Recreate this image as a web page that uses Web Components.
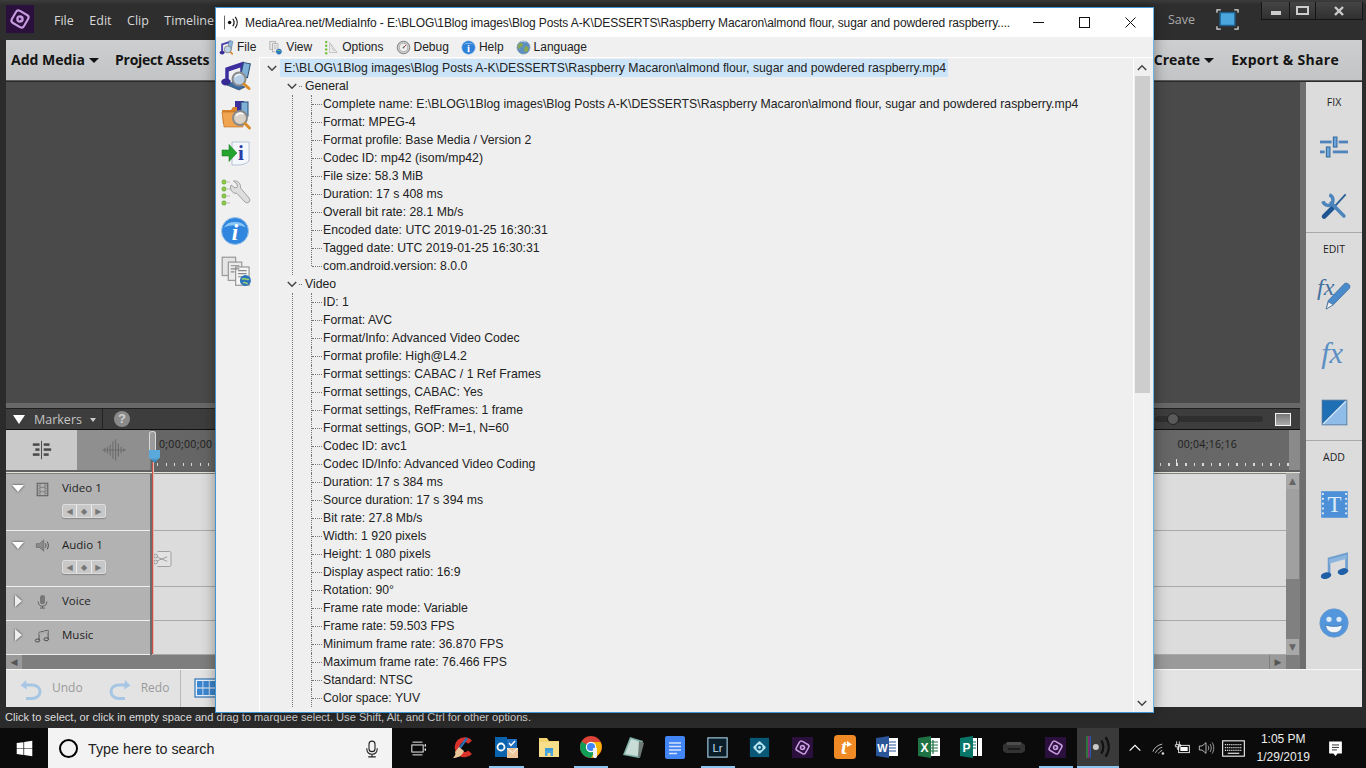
<!DOCTYPE html>
<html>
<head>
<meta charset="utf-8">
<title>MediaInfo over Premiere Elements</title>
<style>
  html, body { margin: 0; padding: 0; }
  body { width: 1366px; height: 768px; overflow: hidden; background: #0b0b0b; position: relative; font-family: "Liberation Sans", Arial, sans-serif; }
</style>
</head>
<body>
<pe-window></pe-window>
<win-taskbar></win-taskbar>

<mi-window title-text="MediaArea.net/MediaInfo - E:\BLOG\1Blog images\Blog Posts A-K\DESSERTS\Raspberry Macaron\almond flour, sugar and powdered raspberry....">
  <mi-tree root="E:\BLOG\1Blog images\Blog Posts A-K\DESSERTS\Raspberry Macaron\almond flour, sugar and powdered raspberry.mp4">
    <tree-group label="General">
      <tree-leaf>Complete name: E:\BLOG\1Blog images\Blog Posts A-K\DESSERTS\Raspberry Macaron\almond flour, sugar and powdered raspberry.mp4</tree-leaf>
      <tree-leaf>Format: MPEG-4</tree-leaf>
      <tree-leaf>Format profile: Base Media / Version 2</tree-leaf>
      <tree-leaf>Codec ID: mp42 (isom/mp42)</tree-leaf>
      <tree-leaf>File size: 58.3 MiB</tree-leaf>
      <tree-leaf>Duration: 17 s 408 ms</tree-leaf>
      <tree-leaf>Overall bit rate: 28.1 Mb/s</tree-leaf>
      <tree-leaf>Encoded date: UTC 2019-01-25 16:30:31</tree-leaf>
      <tree-leaf>Tagged date: UTC 2019-01-25 16:30:31</tree-leaf>
      <tree-leaf>com.android.version: 8.0.0</tree-leaf>
    </tree-group>
    <tree-group label="Video">
      <tree-leaf>ID: 1</tree-leaf>
      <tree-leaf>Format: AVC</tree-leaf>
      <tree-leaf>Format/Info: Advanced Video Codec</tree-leaf>
      <tree-leaf>Format profile: High@L4.2</tree-leaf>
      <tree-leaf>Format settings: CABAC / 1 Ref Frames</tree-leaf>
      <tree-leaf>Format settings, CABAC: Yes</tree-leaf>
      <tree-leaf>Format settings, RefFrames: 1 frame</tree-leaf>
      <tree-leaf>Format settings, GOP: M=1, N=60</tree-leaf>
      <tree-leaf>Codec ID: avc1</tree-leaf>
      <tree-leaf>Codec ID/Info: Advanced Video Coding</tree-leaf>
      <tree-leaf>Duration: 17 s 384 ms</tree-leaf>
      <tree-leaf>Source duration: 17 s 394 ms</tree-leaf>
      <tree-leaf>Bit rate: 27.8 Mb/s</tree-leaf>
      <tree-leaf>Width: 1 920 pixels</tree-leaf>
      <tree-leaf>Height: 1 080 pixels</tree-leaf>
      <tree-leaf>Display aspect ratio: 16:9</tree-leaf>
      <tree-leaf>Rotation: 90°</tree-leaf>
      <tree-leaf>Frame rate mode: Variable</tree-leaf>
      <tree-leaf>Frame rate: 59.503 FPS</tree-leaf>
      <tree-leaf>Minimum frame rate: 36.870 FPS</tree-leaf>
      <tree-leaf>Maximum frame rate: 76.466 FPS</tree-leaf>
      <tree-leaf>Standard: NTSC</tree-leaf>
      <tree-leaf more>Color space: YUV</tree-leaf>
    </tree-group>
  </mi-tree>
</mi-window>

<script>
// all icons, viewBox 0 0 24 24 unless the element says otherwise
const ICONS = {
  elements: `<rect width="24" height="24" fill="#2b0f3c"/><rect x="6" y="6" width="12" height="12" rx="2.5" transform="rotate(30 12 12)" fill="none" stroke="#c79ce0" stroke-width="1.8"/><circle cx="12" cy="12" r="3.2" fill="#c79ce0"/><path d="M11 10.4l2.6 1.6-2.6 1.6z" fill="#2b0f3c"/>`,
  monitor: `<path d="M1 5V2h4M19 2h4v3M1 19v3h4M19 22h4v-3" fill="none" stroke="#ddd" stroke-width="1.3"/><rect x="3.5" y="4" width="17" height="15" fill="#1c5f8e"/><rect x="5" y="5.5" width="14" height="12" fill="#4aa6dc"/>`,
  sliders: `<g fill="#4f83bb"><rect x="0" y="6.5" width="10" height="2.4"/><rect x="16" y="6.5" width="8" height="2.4"/><rect x="0" y="15" width="4" height="2.4"/><rect x="11" y="15" width="13" height="2.4"/></g><rect x="11.5" y="3.5" width="3" height="8.5" fill="#6aa6dc" stroke="#3c6d9f"/><rect x="5.5" y="12" width="3" height="8.5" fill="#6aa6dc" stroke="#3c6d9f"/>`,
  tools: `<path d="M22 2L12 13" stroke="#2c5f95" stroke-width="1.6"/><path d="M11 13.5L3.5 21" stroke="#1f5590" stroke-width="4" stroke-linecap="round"/><path d="M9.5 9.5L20.5 20.5" stroke="#4c84bc" stroke-width="3" stroke-linecap="round"/><path d="M8 2.5C11.5 3.5 12 8 10 10.5 7.5 12.5 3.5 11.5 2.5 8" fill="none" stroke="#4c84bc" stroke-width="3"/>`,
  fxpen: `<text x="0" y="14" font-family="Liberation Serif, serif" font-style="italic" font-size="17" fill="#44709f">fx</text><path d="M6.5 24l1.5-6L19 6.5c1-1 2.2-1 3.4 0s1 2.4 0 3.4L11.5 21z" fill="#4a8ccb" stroke="#2f5f8f" stroke-width=".5"/><path d="M6.5 24l1.5-5 3.5 2z" fill="#eef3f8" stroke="#4d6f90" stroke-width=".5"/>`,
  fx: `<text x="1" y="20" font-family="Liberation Serif, serif" font-style="italic" font-size="26" fill="#5b8fc4">fx</text>`,
  square: `<rect x="1" y="1" width="22" height="22" fill="#8fbce8"/><path d="M1 1h22L1 23z" fill="#1f6fb5"/><path d="M23 1L1 23" stroke="#e8eef5" stroke-width="1.1"/><rect x="1" y="1" width="22" height="22" fill="none" stroke="#4a6f95" stroke-width=".7"/>`,
  titleT: `<rect x="1" y="1" width="22" height="22" fill="#4d90d8"/><g fill="#dce8f3"><rect x="1.6" y="2.5" width="1.6" height="1.6"/><rect x="1.6" y="6.5" width="1.6" height="1.6"/><rect x="1.6" y="10.5" width="1.6" height="1.6"/><rect x="1.6" y="14.5" width="1.6" height="1.6"/><rect x="1.6" y="18.5" width="1.6" height="1.6"/><rect x="20.8" y="2.5" width="1.6" height="1.6"/><rect x="20.8" y="6.5" width="1.6" height="1.6"/><rect x="20.8" y="10.5" width="1.6" height="1.6"/><rect x="20.8" y="14.5" width="1.6" height="1.6"/><rect x="20.8" y="18.5" width="1.6" height="1.6"/></g><text x="12" y="18.5" text-anchor="middle" font-family="Liberation Serif, serif" font-size="19" fill="#dcebf8">T</text>`,
  note: `<path d="M7.5 20V6.5L22 2.5v14" fill="none" stroke="#6f9fd0" stroke-width="2.2"/><path d="M7.5 7L22 3v3.5L7.5 10.5z" fill="#8db6de"/><ellipse cx="5" cy="20.4" rx="4.4" ry="2.7" fill="#1f5fa6" transform="rotate(-14 5 20.4)"/><ellipse cx="19" cy="17" rx="4.4" ry="2.7" fill="#1f5fa6" transform="rotate(-14 19 17)"/>`,
  smile: `<circle cx="12" cy="12" r="11.4" fill="#5496dc" stroke="#6f9ac6" stroke-width=".5"/><circle cx="8" cy="9" r="2.1" fill="#dbe9f6"/><circle cx="16" cy="9" r="2.1" fill="#dbe9f6"/><path d="M5.2 13.5c4 1.6 9.6 1.6 13.6 0-.6 4.4-3.4 6.3-6.8 6.3S5.8 17.9 5.2 13.5z" fill="#f1f5f8" stroke="#2f6aa5" stroke-width=".5"/>`,
  undo: `<path d="M7 4L1.5 9.5 8 13.5" fill="#a8c8e6"/><path d="M4 9h9c5 0 8 3 8 6.5S18 22.5 13 22.5H7" fill="none" stroke="#a6c6e4" stroke-width="3"/>`,
  redo: `<path d="M17 4l5.5 5.5L16 13.5" fill="#a8c8e6"/><path d="M20 9h-9c-5 0-8 3-8 6.5s3 7 8 7h6" fill="none" stroke="#a6c6e4" stroke-width="3"/>`,
  grid: `<rect x="1" y="3" width="22" height="18" fill="#e9f1f9" stroke="#2e73b5" stroke-width="1.2"/><g fill="#3c86cf"><rect x="3" y="5" width="5.5" height="6.5"/><rect x="9.3" y="5" width="5.5" height="6.5"/><rect x="15.6" y="5" width="5.5" height="6.5"/><rect x="3" y="12.5" width="5.5" height="6.5"/><rect x="9.3" y="12.5" width="5.5" height="6.5"/><rect x="15.6" y="12.5" width="5.5" height="6.5"/></g>`,
  trackFilm: `<rect x="3.5" y="2" width="17" height="20" fill="none" stroke="#555" stroke-width="1.5"/><path d="M8 2v20M16 2v20M8 8.5h8M8 15.5h8M3.5 6h4M3.5 10h4M3.5 14h4M3.5 18h4M16 6h4.5M16 10h4.5M16 14h4.5M16 18h4.5" stroke="#666" stroke-width="1" fill="none"/>`,
  trackAudio: `<path d="M2 9h5l7-6v18l-7-6H2z" fill="#8a8a8a" stroke="#555" stroke-width=".8"/><path d="M16.5 8.5c1.5 2 1.5 5 0 7M19.5 6c2.5 3.5 2.5 8.5 0 12" fill="none" stroke="#444" stroke-width="1.5"/>`,
  trackVoice: `<rect x="8" y="1.5" width="8" height="15" rx="4" fill="#777"/><path d="M5 12c0 5 3 7.5 7 7.5s7-2.5 7-7.5M12 19.5V22M8 22.5h8" fill="none" stroke="#555" stroke-width="1.4"/>`,
  trackMusic: `<path d="M6.5 20V7L21 3.5V18" fill="none" stroke="#555" stroke-width="1.6"/><path d="M6.5 7.5L21 4v3L6.5 10.5z" fill="#aaa"/><ellipse cx="4" cy="20" rx="3.6" ry="2.4" fill="none" stroke="#444" stroke-width="1.5"/><ellipse cx="18" cy="18" rx="3.6" ry="2.4" fill="none" stroke="#444" stroke-width="1.5"/>`,
  collapse: `<g fill="#4a4a4a"><rect x="1" y="4" width="8" height="3"/><rect x="14" y="4" width="7" height="3"/><rect x="4" y="10" width="5" height="3"/><rect x="14" y="10" width="9" height="3"/><rect x="1" y="16" width="8" height="3"/><rect x="14" y="16" width="6" height="3"/></g><rect x="11" y="1" width="1" height="22" fill="#333"/>`,
  wave: `<path d="M1 12h22M3.5 10v4M6 9v6M8.5 7v10M11 4v16M13.5 2v20M16 6v12M18.5 9v6M21 10.5v3" stroke="#6c6c6c" stroke-width="1" fill="none"/>`,
  scissors: `<path d="M6 2h16a2 2 0 0 1 2 2v16a2 2 0 0 1-2 2H6" fill="#e2e2e2" stroke="#999" stroke-width="1.2"/><circle cx="3.5" cy="8" r="2.5" fill="none" stroke="#999" stroke-width="1.2"/><circle cx="3.5" cy="16" r="2.5" fill="none" stroke="#999" stroke-width="1.2"/><path d="M5.5 9.5L19 15M5.5 14.5L19 9" stroke="#999" stroke-width="1.2"/>`,

  miFile: `<path d="M5 20V7l13-4v15" fill="none" stroke="#4b3fa8" stroke-width="3"/><ellipse cx="5" cy="20" rx="4" ry="3" fill="#3c2f97"/><rect x="15" y="1.5" width="6" height="14" fill="#8fb6d8" stroke="#345a80" stroke-width=".6" transform="rotate(12 18 8)"/><circle cx="14" cy="15" r="5.5" fill="#bdd3e8" stroke="#8b8b8b" stroke-width="1.5"/><path d="M18 19l4 4" stroke="#d88a2a" stroke-width="2.5"/>`,
  miView: `<rect x="3" y="2" width="9" height="13" fill="#e8e8e8" stroke="#9a9a9a"/><rect x="7" y="6" width="9" height="13" fill="#f0f0f0" stroke="#9a9a9a"/><path d="M9 9h5M9 11.5h5M9 14h5" stroke="#aaa"/><circle cx="17.5" cy="18.5" r="4.5" fill="#2a78c0"/><path d="M15 17c2-1.5 3 1 5 0" stroke="#8fd06a" fill="none" stroke-width="1.4"/>`,
  miOptions: `<path d="M9 4l12 16H9z" fill="#efefef" stroke="#aaa"/><path d="M12 12l5 6M11 9h2" stroke="#999"/><g fill="#7ac143"><circle cx="3.5" cy="3" r="2"/><circle cx="3.5" cy="9" r="2"/><circle cx="3.5" cy="15" r="2"/><circle cx="3.5" cy="21" r="2"/></g>`,
  miDebug: `<circle cx="12" cy="12" r="10" fill="#cfcfcf" stroke="#777" stroke-width="1.5"/><circle cx="12" cy="12" r="6.5" fill="#f2f2f2" stroke="#999"/><path d="M12 12l4-4" stroke="#b03030" stroke-width="1.6"/><circle cx="12" cy="12" r="1.5" fill="#666"/>`,
  miHelp: `<circle cx="12" cy="12" r="11" fill="#2f80d8" stroke="#bcd5ef"/><path d="M4 8a9 7 0 0 1 16 0c-4-2.5-12-2.5-16 0z" fill="#8cc1f2"/><text x="12" y="19" text-anchor="middle" font-family="Liberation Serif, serif" font-weight="700" font-size="17" fill="#fff">i</text>`,
  miLang: `<circle cx="12" cy="12" r="10.5" fill="#5d8fc2" stroke="#8a9aa8"/><path d="M6 5c4-1 6 2 5 4s-4 1-5 4-2 1-3-1 1-5 3-7zM14 11c4-2 6 0 6 3s-3 6-5 5-3-6-1-8z" fill="#8aa84e"/><path d="M8 3c3-1 6-1 8 1" stroke="#dfeaf3" fill="none" stroke-width="1.2"/>`,
  miOpen: `<path d="M6 21V8l15-5v15" fill="none" stroke="#3d2f9e" stroke-width="3.5"/><path d="M6 8l15-5v3L6 11z" fill="#3d2f9e"/><ellipse cx="5" cy="21" rx="4.8" ry="3.4" fill="#352a96"/><path d="M6 24l12 5 6-3-12-5z" fill="#3a6ba3" stroke="#1d3557" stroke-width=".6"/><rect x="21" y="2" width="7" height="14" fill="#7fb0d8" stroke="#2a4e75" transform="rotate(12 24 9)"/><circle cx="18" cy="18" r="6.5" fill="#b6cde4" stroke="#8a8a8a" stroke-width="2"/><path d="M14 16a5 5 0 0 1 6-2" stroke="#eef5fb" stroke-width="1.5" fill="none"/><path d="M23 23l5 4.5" stroke="#d98c2a" stroke-width="3" stroke-linecap="round"/>`,
  miFolder: `<rect x="14" y="1" width="9" height="14" fill="#3d2f9e"/><rect x="20" y="2" width="7" height="14" fill="#7fb0d8" stroke="#2a4e75"/><path d="M1 10h9l2-3h4v17H2z" fill="#d9832b"/><path d="M1 12h22l-1 15H3z" fill="#f0a450" stroke="#b96a1d" stroke-width=".6"/><circle cx="19" cy="18" r="7" fill="#d8d2c8" stroke="#8a8a8a" stroke-width="2"/><path d="M15 16a5 5 0 0 1 7-2" stroke="#fff" stroke-width="1.5" fill="none"/><path d="M24 23.5l4.5 4.5" stroke="#d98c2a" stroke-width="3" stroke-linecap="round"/>`,
  miInfoArrow: `<path d="M11 3h17v19c-3 3-7 4-12 4h-5z" fill="#f4f7fb" stroke="#a7b8d0" stroke-width=".8"/><text x="20" y="21" text-anchor="middle" font-family="Liberation Serif, serif" font-weight="700" font-size="21" fill="#2b3fa8">i</text><path d="M1 11h7V5.500L16 14l-8 8.500V17H1z" fill="#25a32f" stroke="#15751c" stroke-width=".5"/>`,
  miTools: `<g fill="#8cc84b" stroke="#5a9a25" stroke-width=".5"><circle cx="3" cy="4" r="2.2"/><circle cx="3" cy="11" r="2.2"/><circle cx="3" cy="18" r="2.2"/><circle cx="3" cy="25" r="2.2"/></g><path d="M6 4h3M6 11h3M6 18h3M6 25h3" stroke="#bbb"/><path d="M10 7l4 3 2.5-1-.5-3-3.5-3a6 6 0 0 1 7 7L28 20a2.500 2.500 0 0 1-4 4l-8-8.500A6 6 0 0 1 10 7z" fill="#dedede" stroke="#999" stroke-width=".9"/>`,
  miInfo: `<circle cx="14" cy="14" r="13.5" fill="#2e86de" stroke="#9cc3ea"/><path d="M3 10.500a12 9 0 0 1 22 0c-6-3-16-3-22 0z" fill="#8cc6f6"/><text x="14" y="23" text-anchor="middle" font-family="Liberation Serif, serif" font-style="italic" font-weight="700" font-size="23" fill="#fff">i</text>`,
  miDocs: `<g transform="scale(1.22)"><rect x="1" y="1" width="11" height="15" fill="#e4e4e4" stroke="#999"/><rect x="6" y="5" width="11" height="15" fill="#ececec" stroke="#999"/><rect x="12" y="9" width="11" height="15" fill="#f6f6f6" stroke="#999"/><path d="M8 8h7M8 10.5h7M8 13h3M14 12h7M14 14.5h7M14 17h4" stroke="#888"/><circle cx="20" cy="20" r="4.5" fill="#2b74bc"/><path d="M17 19c2-1.5 4 1 6 0M18 22c2-1 2 1 4 .5" stroke="#9ad06e" fill="none" stroke-width="1.2"/></g>`,
  miApp: `<rect x="0" y="1" width="1.3" height="22" fill="#444"/><circle cx="9" cy="12" r="2.8" fill="#111"/><path d="M14 6c2.500 3.500 2.500 8.500 0 12M18 3c4 5.500 4 12.500 0 18" fill="none" stroke="#222" stroke-width="2"/>`,
  miAppTask: `<rect x="1" y="2" width="1.6" height="20" fill="#2f7f3f"/><rect x="3" y="2" width="1.2" height="20" fill="#a02a8a"/><rect x="4.5" y="2" width="1" height="20" fill="#2a55b0"/><circle cx="10" cy="12" r="2.8" fill="#c8c8c8"/><path d="M15 6c2.500 3.500 2.500 8.500 0 12M19 3c4 5.500 4 12.500 0 18" fill="none" stroke="#111" stroke-width="2"/>`,

  winLogo: `<path d="M1 4.2L10.5 3v8.5H1zM11.5 2.800L23 1.200v10.300H11.500zM1 12.500h9.500V21L1 19.800zM11.500 12.500H23v10.300l-11.500-1.600z" fill="#fff"/>`,
  mic: `<rect x="8" y="1.500" width="8" height="14" rx="4" fill="none" stroke="#222" stroke-width="1.5"/><path d="M5 11c0 5 3 8 7 8s7-3 7-8M12 19v3M7 22.500h10" fill="none" stroke="#222" stroke-width="1.5"/>`,
  taskview: `<path d="M5 3h14M5 21h14" stroke="#fff" stroke-width="1.3"/><rect x="4" y="7" width="16" height="10" fill="none" stroke="#fff" stroke-width="1.3"/><path d="M23 6v3M23 12v3" stroke="#fff" stroke-width="1.8"/>`,
  ccleaner: `<path d="M20 5.500A10 10 0 1 0 20 19l-3.800-3.500a5 5 0 1 1 0-6.800z" fill="#d9322a"/><path d="M15 3L7 14" stroke="#2d6fb4" stroke-width="2.4"/><path d="M7 12l5 4c-2 5-6 7-11 7 2-2 3-4 2-6z" fill="#ecc69a"/>`,
  outlook: `<rect x="10" y="4" width="13" height="13" fill="#1f6fc0"/><rect x="1" y="2" width="12" height="20" fill="#0a64ad"/><circle cx="7" cy="12" r="3.5" fill="none" stroke="#fff" stroke-width="1.8"/><path d="M15 8l2 2.500 4-4.500" stroke="#fff" fill="none" stroke-width="1.4"/><rect x="13" y="13" width="11" height="10" fill="#ecc69a"/><path d="M13 13l5.500 5 5.500-5" fill="none" stroke="#fff" stroke-width="1"/>`,
  explorer: `<path d="M2 3h8l2 3h10v16H2z" fill="#f2d36f"/><rect x="2" y="7" width="20" height="15" fill="#f6de8a"/><path d="M8 21v-6h8v6h-2.500v-3h-3v3z" fill="#4aa6dc"/><rect x="8" y="13" width="8" height="2.5" fill="#3a9ad5"/>`,
  chrome: `<circle cx="12" cy="12" r="11" fill="#db4437"/><path d="M12 12L2.500 6.500A11 11 0 0 0 12 23l5.500-5z" fill="#0f9d58"/><path d="M12 7h9.500A11 11 0 0 1 12 23l5-9z" fill="#f4b400"/><circle cx="12" cy="12" r="5.2" fill="#fff"/><circle cx="12" cy="12" r="4" fill="#4285f4"/><path d="M14 13h4v9c-1 1.500-3 1.500-4 0z" fill="#f2f2f2"/>`,
  notepad: `<path d="M2 20L9 2l13 4-4 17z" fill="#7fb0a6"/><path d="M4 19L10 4l10 3-3 14z" fill="#c9dcd6"/><path d="M18 6l5 2-4 15-2-1z" fill="#6d7a75"/>`,
  docs: `<rect x="2" y="1" width="20" height="23" rx="2" fill="#4285f4"/><path d="M6 8h12M6 11.500h12M6 15h12M6 18.500h8" stroke="#d6e4fb" stroke-width="1.5"/>`,
  lr: `<rect x="1" y="1" width="22" height="22" fill="#0c1d2a" stroke="#a6cfe6" stroke-width="1.3"/><text x="12" y="17" text-anchor="middle" font-family="Liberation Sans, sans-serif" font-size="13" fill="#c3dff0">Lr</text>`,
  elementsBlue: `<rect x="1" y="1" width="22" height="22" fill="#0a5878"/><rect x="6.5" y="6.5" width="11" height="11" rx="2" transform="rotate(45 12 12)" fill="#b7e6f2"/><circle cx="12" cy="12" r="3.5" fill="#0a5878"/><circle cx="12" cy="12" r="1.6" fill="#b7e6f2"/>`,
  tinder: `<rect x="1" y="0" width="22" height="24" rx="3.5" fill="#f08a24"/><text x="11" y="19" text-anchor="middle" font-family="Liberation Serif, serif" font-style="italic" font-weight="700" font-size="21" fill="#fff">t</text><path d="M14 6l5 3.500-5 2.500z" fill="#fff"/>`,
  word: `<rect x="9" y="3" width="14" height="18" fill="#fff"/><path d="M12 7h9M12 10h9M12 13h9M12 16h9" stroke="#2a5699" stroke-width="1.2"/><path d="M1 3l13-2v22L1 21z" fill="#2a5699"/><text x="7.5" y="16.5" text-anchor="middle" font-family="Liberation Sans, sans-serif" font-weight="700" font-size="11" fill="#fff">W</text>`,
  excel: `<rect x="9" y="3" width="14" height="18" fill="#fff"/><path d="M12 7h9M12 10h9M12 13h9M12 16h9M16 5v14" stroke="#1f7244" stroke-width="1.2"/><path d="M1 3l13-2v22L1 21z" fill="#1f7244"/><text x="7.5" y="16.5" text-anchor="middle" font-family="Liberation Sans, sans-serif" font-weight="700" font-size="12" fill="#fff">X</text>`,
  publisher: `<rect x="13" y="3" width="5" height="18" fill="#fff"/><rect x="19" y="3" width="4" height="18" fill="#fff"/><path d="M14 7h3M14 10h3M14 13h3" stroke="#077568" stroke-width="1.2"/><path d="M1 3l13-2v22L1 21z" fill="#077568"/><text x="7.5" y="16.5" text-anchor="middle" font-family="Liberation Sans, sans-serif" font-weight="700" font-size="12" fill="#fff">P</text>`,
  printer: `<path d="M1 10l4-3h14l4 3v6l-3 2H4l-3-2z" fill="#333"/><path d="M5 7h14v3H5z" fill="#4d4d4d"/><rect x="6" y="13" width="12" height="2" fill="#1c1c1c"/>`,
  chevUp: `<path d="M4 16l8-8 8 8" fill="none" stroke="#fff" stroke-width="1.8"/>`,
  wifi: `<path d="M3 17c2-6 8-11 15-12M7 19c2-4 6-8 11-9M12 20c1-2 3-4 6-5" fill="none" stroke="#ddd" stroke-width="1.3"/><circle cx="19" cy="20" r="2" fill="#ddd"/>`,
  battery: `<path d="M4 2v5M8 2v5M2 7h8v3H7v4H5v-4H2z" fill="none" stroke="#fff" stroke-width="1.2"/><rect x="7" y="8" width="16" height="11" fill="none" stroke="#fff" stroke-width="1.3"/><rect x="9.5" y="10.5" width="11" height="6" fill="#fff"/>`,
  speaker: `<path d="M2 9h4l6-5v16l-6-5H2z" fill="none" stroke="#ddd" stroke-width="1.2"/><path d="M15 8.500c1.500 2 1.500 5 0 7M18 6c2.500 3.500 2.500 8.500 0 12M21 3.500c3.500 5 3.500 12 0 17" fill="none" stroke="#ccc" stroke-width="1.1"/>`,
  keyboard: `<rect x=".7" y="4" width="22.6" height="16" fill="none" stroke="#fff" stroke-width="1.1"/><path d="M3 8h18M3 11h18M3 14h18" stroke="#ddd" stroke-width="1.3" stroke-dasharray="1.2 .8"/><path d="M6 17h12" stroke="#ddd" stroke-width="1.3"/>`,
  notify: `<path d="M3 2h18v17h-6l-3 3.500L9 19H3z" fill="#fff"/><path d="M7 7h10M7 10.500h10M7 14h7" stroke="#111" stroke-width="1.2"/>`
};

class AppIcon extends HTMLElement {
  connectedCallback() {
    const w = this.getAttribute('size') || 24;
    const box = this.getAttribute('box') || 24;
    this.attachShadow({ mode: 'open' });
    this.shadowRoot.innerHTML = `
      <style>
        :host { display: inline-flex; flex: none; line-height: 0; }
        svg { display: block; overflow: visible; }
      </style>
      <svg width="${w}" height="${w}" viewBox="0 0 ${box} ${box}">${ICONS[this.getAttribute('name')] || ''}</svg>`;
  }
}
customElements.define('app-icon', AppIcon);

// ---------- Premiere Elements window behind ----------

class PeHeader extends HTMLElement {
  constructor() {
    super();
    this.attachShadow({ mode: 'open' });
    this.shadowRoot.innerHTML = `
      <style>
        :host { display: flex; align-items: center; height: 40px; background: linear-gradient(#3c3c3c, #2e2e2e 12%, #2e2e2e); color: #d8d8d8;
          font: 12.5px "Open Sans", sans-serif; padding: 0 3px 0 6px; box-sizing: border-box; }
        .logo { margin: -2px 20px 0 0; }
        nav { display: flex; gap: 15.5px; flex: 1; }
        .save { color: #a9a9a9; margin-right: 21px; margin-top: -1px; }
        .mon { margin-right: 22px; margin-top: -2px; }
        .ctl { display: flex; align-self: flex-start; margin-top: 2px; height: 17px; border: 1px solid #151515; border-top: 0; background: linear-gradient(#454545, #303030); }
        .ctl div { display: flex; align-items: center; justify-content: center; border-left: 1px solid #151515; }
        .ctl div:first-child { border: 0; width: 27px; }
        .ctl div:nth-child(2) { width: 25px; }
        .ctl div:nth-child(3) { width: 46px; }
        i.m { width: 10px; height: 4px; background: #ccc; margin-top: 4px; }
        i.r { width: 9px; height: 5px; border: 2px solid #ccc; }
      </style>
      <app-icon class="logo" name="elements" size="28"></app-icon>
      <nav><span>File</span><span>Edit</span><span>Clip</span><span>Timeline</span></nav>
      <span class="save">Save</span>
      <app-icon class="mon" name="monitor" size="23"></app-icon>
      <div class="ctl"><div><i class="m"></i></div><div><i class="r"></i></div><div><svg width="10" height="10"><path d="M1 1l8 8M9 1l-8 8" stroke="#ccc" stroke-width="2.4"/></svg></div></div>`;
  }
}
customElements.define('pe-header', PeHeader);

class PeTabs extends HTMLElement {
  constructor() {
    super();
    this.attachShadow({ mode: 'open' });
    this.shadowRoot.innerHTML = `
      <style>
        :host { display: flex; align-items: center; height: 41px; margin: 0 4px 0 6px; padding: 0 23px 2px 5px; box-sizing: border-box;
          background: linear-gradient(#cdcecf, #c2c4c5); border-bottom: 1px solid #5a5a5a; color: #141414;
          font: bold 14px "Open Sans", sans-serif; }
        span { white-space: nowrap; }
        .car { display: inline-block; margin-left: 4px; border: 5px solid transparent; border-top: 5px solid #111; border-bottom: 0; vertical-align: 2px; }
        .sp { flex: 1; }
        .a { margin-right: 16px; }
        .p { letter-spacing: -.3px; }
        .b { margin-right: 17px; }
        .e { letter-spacing: .3px; }
      </style>
      <span class="a">Add Media<i class="car"></i></span>
      <span class="p">Project Assets</span>
      <div class="sp"></div>
      <span class="b">Create<i class="car"></i></span>
      <span class="e">Export &amp; Share</span>`;
  }
}
customElements.define('pe-tabs', PeTabs);

class TrackRow extends HTMLElement {
  constructor() {
    super();
    this.attachShadow({ mode: 'open' });
  }
  connectedCallback() {
    const h = this.getAttribute('h');
    const open = this.hasAttribute('open');
    this.shadowRoot.innerHTML = `
      <style>
        :host { display: grid; grid-template-columns: 144px 1fr; height: ${h}px; box-sizing: border-box; }
        .head { display: grid; grid-template-columns: 24px 24px 1fr; grid-template-rows: ${this.getAttribute('top') || 26}px auto; background: #b2b2b2; border-bottom: 1px solid #eeeeee;
           color: #1f1f1f; font: 11.5px "Open Sans", sans-serif; box-sizing: border-box; }
        .tri { align-self: center; justify-self: center; width: 0; height: 0; margin-top: 2px;
           ${open ? 'border: 6px solid transparent; border-top: 7px solid #fff; border-bottom: 0; filter: drop-shadow(0 0 1px #333);'
                  : 'border: 6px solid transparent; border-left: 7px solid #eee; border-right: 0; filter: drop-shadow(0 0 1px #333);'} }
        app-icon { align-self: center; justify-self: center; margin-top: 3px; }
        .name { align-self: center; margin-left: 8px; }
        .keys { grid-column: 3; margin: 3px 0 0 8px; display: ${open ? 'flex' : 'none'}; width: 42px; height: 12px; border: 1px solid #ddd; border-radius: 2px; background: #c8c8c8; box-shadow: 0 1px 1px #888; }
        .keys i { flex: 1; display: flex; align-items: center; justify-content: center; border-left: 1px solid #eee; color: #777; font: normal 8px "DejaVu Sans", sans-serif; }
        .keys i:first-child { border: 0; }
        .lane { background: #dcdcdc; border-bottom: 1px solid #a9a9a9; margin-left: 2px; border-left: 1px solid #eee; display: flex; align-items: center; box-sizing: border-box; box-shadow: -2px 0 0 #6c6c6c; }
      </style>
      <div class="head">
        <div class="tri"></div>
        <app-icon name="${this.getAttribute('icon')}" size="15"></app-icon>
        <div class="name">${this.getAttribute('label')}</div>
        <div class="keys"><i>◀</i><i>◆</i><i>▶</i></div>
      </div>
      <div class="lane"><slot></slot></div>`;
  }
}
customElements.define('track-row', TrackRow);

class PeTimeline extends HTMLElement {
  constructor() {
    super();
    this.attachShadow({ mode: 'open' });
    this.shadowRoot.innerHTML = `
      <style>
        :host { display: flex; flex-direction: column; height: 261px; position: relative; font: 10.5px "Open Sans", sans-serif; }
        .markers { display: flex; align-items: center; height: 22px; box-sizing: border-box; background: #3d3d3d; border-bottom: 1px solid #101010; border-top: 1px solid #202020; color: #c4c4c4; font-size: 12.5px; }
        .tri { margin: 0 9px 0 7px; border: 6px solid transparent; border-top: 9px solid #fff; border-bottom: 0; }
        .car { margin: 2px 0 0 8px; border: 3px solid transparent; border-top: 4px solid #ccc; border-bottom: 0; }
        .sep { width: 1px; height: 21px; background: #222; margin: 0 11px 0 6px; }
        .help { width: 16px; height: 16px; border-radius: 50%; background: #8a8a8a; color: #cfcfcf; text-align: center; font: bold 13px/16px "Liberation Sans", sans-serif; }
        .grow { flex: 1; }
        .slider { width: 108px; height: 6px; border-radius: 3px; background: #2f2f2f; display: flex; align-items: center; margin-right: 12px; padding-left: 12px; box-sizing: border-box; }
        .slider i { width: 12px; height: 12px; border-radius: 50%; background: #5a5a5a; border: 1px solid #222; box-sizing: border-box; }
        .fit { width: 16px; height: 13px; border: 1px solid #f2f2f2; background: linear-gradient(#777, #ababab); margin-right: 9px; box-sizing: border-box; }
        .ruler { display: flex; height: 42px; background: #616161; }
        .t1 { width: 71px; background: #c9c9c9; display: flex; align-items: center; justify-content: center; }
        .t2 { width: 73px; background: #8f8f8f; display: flex; align-items: center; justify-content: center; }
        .t1, .t2 { height: 40px; }
        .scale { flex: 1; height: 40px; display: flex; justify-content: space-between; color: #1d1d1d; font-size: 10.5px; background: linear-gradient(90deg, #666, #5b5b5b 50%, #696969);
          border-left: 1px solid #777; padding: 7px 0 0 8px; box-sizing: border-box; letter-spacing: .3px; position: relative; }
        .ticks { position: absolute; left: 6px; right: 0; bottom: 4px; height: 3px; background: repeating-linear-gradient(90deg, #d8d8d8 0 1px, transparent 1px 8.5px); }
        .big { position: absolute; right: 112px; bottom: 4px; width: 1px; height: 7px; background: #e0e0e0; }
        .time2 { margin-right: 52px; }
        .edge { width: 11px; background: #8a8a8a; height: 40px; }
        .body { display: flex; flex: 1; min-height: 0; border-top: 1px solid #e4e4dc; background: #808080; }
        .rows { flex: 1; margin-top: 1px; }
        .vs { width: 13px; margin-right: 1px; background: #808080; display: flex; flex-direction: column; color: #666; }
        .vs i { height: 16px; background: #a8a8a8; display: flex; align-items: center; justify-content: center; font: normal 9px "DejaVu Sans", sans-serif; }
        .vs b { height: 90px; background: #a0a0a0; }
        .vs u { flex: 1; }
        .hs { display: flex; height: 14px; background: #7e7e7e; color: #555; }
        .hs i { width: 16px; background: #9a9a9a; display: flex; align-items: center; justify-content: center; font: normal 9px "DejaVu Sans", sans-serif; }
        .hs u { flex: 1; }
        .hs b { width: 570px; background: #9a9a9a; margin-right: 1px; }
        .hs em { width: 14px; }
        .head { position: absolute; left: 143px; top: 23px; width: 12px; height: 32px; pointer-events: none; }
        .grab { width: 7px; height: 19px; background: #9b9b9b; border: 1px solid #d8d8d8; border-bottom: 0; border-radius: 3px 3px 0 0; box-sizing: border-box; }
        .flag { width: 11px; height: 13px; background: linear-gradient(#5aa9da 60%, #2478ad); clip-path: polygon(0 0, 100% 0, 100% 55%, 50% 100%, 0 55%); }
        .play { position: absolute; left: 146px; top: 54px; width: 1px; height: 192px; background: #cb4f47; box-shadow: 1px 0 0 #e5b5b0; }
      </style>
      <div class="markers">
        <i class="tri"></i><span>Markers</span><i class="car"></i><i class="sep"></i><div class="help">?</div>
        <div class="grow"></div>
        <div class="slider"><i></i></div><div class="fit"></div>
      </div>
      <div class="ruler">
        <div class="t1"><app-icon name="collapse" size="20"></app-icon></div>
        <div class="t2"><app-icon name="wave" size="26"></app-icon></div>
        <div class="scale"><span>0;00;00;00</span><span class="time2">00;04;16;16</span><div class="ticks"></div><div class="big"></div></div>
        <div class="edge"></div>
      </div>
      <div class="body">
        <div class="rows"><slot></slot></div>
        <div class="vs"><i>▲</i><b></b><u></u><i>▼</i></div>
      </div>
      <div class="hs"><i>◀</i><u></u><b></b><i>▶</i><em></em></div>
      <div class="head"><div class="grab"></div><div class="flag"></div></div>
      <div class="play"></div>`;
  }
}
customElements.define('pe-timeline', PeTimeline);

class RailGroup extends HTMLElement {
  constructor() {
    super();
    this.attachShadow({ mode: 'open' });
  }
  connectedCallback() {
    this.shadowRoot.innerHTML = `
      <style>
        :host { display: flex; flex-direction: column; align-items: center; height: ${this.getAttribute('h')}px; box-sizing: border-box; border-bottom: 1px solid #a8a8a8; }
        :host(:last-child) { border: 0; }
        h4 { margin: 0; font: normal 10.5px/32px "Open Sans", sans-serif; color: #202020; height: 28px; margin-top: ${this.getAttribute('top') || 0}px; }
        .items { display: flex; flex-direction: column; align-items: center; gap: ${this.getAttribute('gap')}px; margin-top: ${this.getAttribute('pad')}px; }
      </style>
      <h4>${this.getAttribute('label')}</h4>
      <div class="items"><slot></slot></div>`;
  }
}
customElements.define('rail-group', RailGroup);

class PeActions extends HTMLElement {
  constructor() {
    super();
    this.attachShadow({ mode: 'open' });
    this.shadowRoot.innerHTML = `
      <style>
        :host { display: flex; align-items: center; height: 38px; margin: 0 4px 0 6px; box-sizing: border-box; background: #e3e3e3; border-top: 1px solid #f8f8f8; padding-bottom: 2px;
          color: #9a9a9a; font: 12px "Open Sans", sans-serif; }
        span { margin: 0 25px 0 9px; }
        app-icon { margin-left: 13px; }
        .redo { margin-left: 0; }
        .sep { width: 1px; align-self: stretch; background: #b8b8b8; margin: 0 13px -2px -14px; }
        .grid { margin-left: 0; }
      </style>
      <app-icon name="undo" size="24"></app-icon><span>Undo</span>
      <app-icon class="redo" name="redo" size="24"></app-icon><span>Redo</span>
      <i class="sep"></i>
      <app-icon class="grid" name="grid" size="24"></app-icon>`;
  }
}
customElements.define('pe-actions', PeActions);

class PeWindow extends HTMLElement {
  constructor() {
    super();
    this.attachShadow({ mode: 'open' });
    this.shadowRoot.innerHTML = `
      <style>
        :host { display: flex; flex-direction: column; width: 1366px; height: 728px; background: #2b2b2b; }
        .main { flex: 1; min-height: 0; display: flex; padding: 1px 4px 0 6px; }
        .center { width: 1294px; display: flex; flex-direction: column; }
        .preview { flex: 1; background: #4a4a4a; }
        .gut { height: 5px; background: #686868; }
        .strip { width: 6px; background: #6e6e6e; }
        .rail { width: 56px; background: #dcdcdc; }
        .status { height: 21px; color: #dcdcdc; padding: 4px 0 0 5px; font: 11.1px "Liberation Sans", sans-serif; box-sizing: border-box; white-space: nowrap; }
      </style>
      <pe-header></pe-header>
      <pe-tabs></pe-tabs>
      <div class="main">
        <div class="center">
          <div class="preview"></div>
          <div class="gut"></div>
          <pe-timeline>
            <track-row h="57" top="27" open icon="trackFilm" label="Video 1"></track-row>
            <track-row h="56" open icon="trackAudio" label="Audio 1"><app-icon name="scissors" size="18"></app-icon></track-row>
            <track-row h="34" icon="trackVoice" label="Voice"></track-row>
            <track-row h="34" icon="trackMusic" label="Music"></track-row>
          </pe-timeline>
        </div>
        <div class="strip"></div>
        <div class="rail">
          <rail-group h="151" top="4" label="FIX" pad="19" gap="31">
            <app-icon name="sliders" size="28"></app-icon>
            <app-icon name="tools" size="28"></app-icon>
          </rail-group>
          <rail-group h="208" label="EDIT" pad="14" gap="31">
            <app-icon name="fxpen" size="34"></app-icon>
            <app-icon name="fx" size="28"></app-icon>
            <app-icon name="square" size="27"></app-icon>
          </rail-group>
          <rail-group h="227" label="ADD" pad="21" gap="30">
            <app-icon name="titleT" size="29"></app-icon>
            <app-icon name="note" size="29" style="margin:2px 0 -2px"></app-icon>
            <app-icon name="smile" size="30"></app-icon>
          </rail-group>
        </div>
      </div>
      <pe-actions></pe-actions>
      <div class="status">Click to select, or click in empty space and drag to marquee select. Use Shift, Alt, and Ctrl for other options.</div>`;
  }
}
customElements.define('pe-window', PeWindow);

// ---------- taskbar ----------

class TaskIcon extends HTMLElement {
  constructor() {
    super();
    this.attachShadow({ mode: 'open' });
  }
  connectedCallback() {
    const state = this.getAttribute('state') || '';
    this.shadowRoot.innerHTML = `
      <style>
        :host { display: flex; align-items: center; justify-content: center; position: relative; width: 42.27px; height: 40px; box-sizing: border-box; padding-bottom: 2px; flex: none; }
        :host([state=active]) { background: #3a3a3a; }
        .bar { position: absolute; bottom: 0; left: 4px; right: 4px; height: 2px; background: #8cc4ee; }
        :host([state=active]) .bar { left: 0; right: 0; }
      </style>
      <app-icon name="${this.getAttribute('name')}" size="${this.getAttribute('size') || 24}"></app-icon>
      ${state ? '<div class="bar"></div>' : ''}`;
  }
}
customElements.define('task-icon', TaskIcon);

class WinTaskbar extends HTMLElement {
  constructor() {
    super();
    this.attachShadow({ mode: 'open' });
    this.shadowRoot.innerHTML = `
      <style>
        :host { display: flex; align-items: stretch; width: 1366px; height: 40px; background: #0b0b0b; color: #fff; font-family: "Liberation Sans", sans-serif; }
        .start { width: 48px; display: flex; align-items: center; justify-content: center; }
        .search { width: 344px; background: #f3f3f3; color: #222; display: flex; align-items: center; font-size: 14.3px; box-sizing: border-box; padding: 1px 11px 0 11px; }
        .ring { width: 19px; height: 19px; border: 2.5px solid #000; border-radius: 50%; box-sizing: border-box; margin-right: 10px; }
        .search span { flex: 1; }
        .tv { width: 51px; display: flex; align-items: center; justify-content: center; }
        .tray { display: flex; align-items: center; flex: 1; min-width: 0; padding-left: 8px; gap: 8px; }
        .clock { width: 72px; text-align: center; font-size: 12px; line-height: 18px; color: #eee; margin-left: -6px; }
      </style>
      <div class="start"><app-icon name="winLogo" size="17"></app-icon></div>
      <div class="search"><div class="ring"></div><span>Type here to search</span><app-icon name="mic" size="18"></app-icon></div>
      <div class="tv"><app-icon name="taskview" size="17"></app-icon></div>
      <task-icon name="ccleaner"></task-icon>
      <task-icon name="outlook" state="on"></task-icon>
      <task-icon name="explorer"></task-icon>
      <task-icon name="chrome" state="on"></task-icon>
      <task-icon name="notepad"></task-icon>
      <task-icon name="docs"></task-icon>
      <task-icon name="lr" state="on" size="21"></task-icon>
      <task-icon name="elementsBlue" size="21"></task-icon>
      <task-icon name="elements" size="21"></task-icon>
      <task-icon name="tinder"></task-icon>
      <task-icon name="word"></task-icon>
      <task-icon name="excel"></task-icon>
      <task-icon name="publisher"></task-icon>
      <task-icon name="printer"></task-icon>
      <task-icon name="elements" state="on" size="21"></task-icon>
      <task-icon name="miAppTask" state="active" size="26"></task-icon>
      <div class="tray">
        <app-icon name="chevUp" size="16"></app-icon>
        <app-icon name="wifi" size="15"></app-icon>
        <app-icon name="battery" size="16"></app-icon>
        <app-icon name="speaker" size="16"></app-icon>
        <app-icon name="keyboard" size="23"></app-icon>
        <div class="clock">1:05 PM<br>1/29/2019</div>
        <app-icon name="notify" size="17"></app-icon>
      </div>`;
  }
}
customElements.define('win-taskbar', WinTaskbar);

// ---------- MediaInfo window on top ----------

class TreeLeaf extends HTMLElement {
  constructor() {
    super();
    this.attachShadow({ mode: 'open' });
    this.shadowRoot.innerHTML = `
      <style>
        :host { display: flex; align-items: center; height: 18px; margin-left: 18px; white-space: nowrap; }
        .stem { align-self: flex-start; height: 18px; border-left: 1px dotted #777; box-sizing: border-box; }
        :host(:last-child:not([more])) .stem { height: 9px; }
        .tick { width: 10px; border-top: 1px dotted #777; margin-right: 1px; }
      </style>
      <div class="stem"></div><div class="tick"></div><slot></slot>`;
  }
}
customElements.define('tree-leaf', TreeLeaf);

const CHEVRON = `<svg width="10" height="7" viewBox="0 0 10 7"><path d="M.8 1L5 5.2 9.2 1" fill="none" stroke="#444" stroke-width="1.5"/></svg>`;

class TreeGroup extends HTMLElement {
  constructor() {
    super();
    this.attachShadow({ mode: 'open' });
  }
  connectedCallback() {
    this.shadowRoot.innerHTML = `
      <style>
        :host { display: block; margin-left: 32px; }
        .row { display: flex; align-items: center; height: 18px; margin-left: -5px; }
        .dot { width: 3px; border-top: 1px dotted #777; margin: 1px 3px 0 2px; }
        .kids { border-left: 1px dotted #777; }
      </style>
      <div class="row">${CHEVRON}<div class="dot"></div><span>${this.getAttribute('label')}</span></div>
      <div class="kids"><slot></slot></div>`;
  }
}
customElements.define('tree-group', TreeGroup);

class MiTree extends HTMLElement {
  constructor() {
    super();
    this.attachShadow({ mode: 'open' });
  }
  connectedCallback() {
    this.shadowRoot.innerHTML = `
      <style>
        :host { display: flex; flex: 1; min-width: 0; background: #efefef; border-top: 1px solid #fff; border-left: 1px solid #fff; color: #222; font: 12.25px "Liberation Sans", sans-serif; overflow: hidden; }
        .tree { flex: 1; min-width: 0; overflow: hidden; padding-top: 1px; }
        .root { display: flex; align-items: center; height: 18px; padding-left: 7px; }
        .root b { font-weight: normal; background: #cce4f7; padding: 0 2px 0 4px; margin-left: 3px; line-height: 18px; height: 18px; }
        .sb { width: 16px; margin-right: 3px; background: #f0f0f0; border-left: 1px solid #fff; display: flex; flex-direction: column; align-items: center; }
        .up, .dn { height: 18px; display: flex; align-items: center; justify-content: center; }
        .up svg { transform: rotate(180deg); }
        .th { width: 15px; height: 317px; background: #cdcdcd; }
        .gap { flex: 1; }
      </style>
      <div class="tree">
        <div class="root">${CHEVRON}<b>${this.getAttribute('root')}</b></div>
        <slot></slot>
      </div>
      <div class="sb"><div class="up">${CHEVRON}</div><div class="th"></div><div class="gap"></div><div class="dn">${CHEVRON}</div></div>`;
  }
}
customElements.define('mi-tree', MiTree);

class MiWindow extends HTMLElement {
  constructor() {
    super();
    this.attachShadow({ mode: 'open' });
  }
  connectedCallback() {
    const menu = [['miFile', 'File'], ['miView', 'View'], ['miOptions', 'Options'], ['miDebug', 'Debug'], ['miHelp', 'Help'], ['miLang', 'Language']];
    const side = ['miOpen', 'miFolder', 'miInfoArrow', 'miTools', 'miInfo', 'miDocs'];
    this.shadowRoot.innerHTML = `
      <style>
        :host { position: absolute; left: 215px; top: 7px; width: 939px; height: 706px; box-sizing: border-box; display: flex; flex-direction: column;
          background: #f0f0f0; border: 1px solid #3f95cf; border-right-color: #6bb6e6; box-shadow: 0 0 13px rgba(0,0,0,.38); font-family: "Liberation Sans", sans-serif; }
        .title { display: flex; align-items: center; height: 29px; background: #fff; color: #222; flex: none; padding-left: 8px; font-size: 12px; letter-spacing: -.11px; white-space: nowrap; }
        .title app-icon { margin-right: 6px; }
        .title span { flex: 1; min-width: 0; overflow: hidden; }
        .btn { width: 46px; height: 29px; display: flex; align-items: center; justify-content: center; flex: none; }
        .menu { display: flex; align-items: center; height: 20px; flex: none; padding-left: 3px; gap: 12px; font-size: 12px; color: #222; }
        .menu div { display: flex; align-items: center; gap: 3px; }
        .body { flex: 1; min-height: 0; display: flex; }
        .side { width: 43px; flex: none; display: flex; flex-direction: column; align-items: center; gap: 9px; padding: 4px 3px 0 0; box-sizing: border-box; }
      </style>
      <div class="title">
        <app-icon name="miApp" size="15"></app-icon>
        <span>${this.getAttribute('title-text')}</span>
        <div class="btn"><svg width="11" height="11"><path d="M0 5.5h11" stroke="#111"/></svg></div>
        <div class="btn"><svg width="11" height="11"><rect x=".5" y=".5" width="10" height="10" fill="none" stroke="#111"/></svg></div>
        <div class="btn"><svg width="11" height="11"><path d="M.5.5l10 10M10.5.5l-10 10" stroke="#111"/></svg></div>
      </div>
      <div class="menu">${menu.map(m => `<div><app-icon name="${m[0]}" size="15"></app-icon><span>${m[1]}</span></div>`).join('')}</div>
      <div class="body">
        <div class="side">${side.map(s => `<app-icon name="${s}" size="30" box="30"></app-icon>`).join('')}</div>
        <slot></slot>
      </div>`;
  }
}
customElements.define('mi-window', MiWindow);
</script>
</body>
</html>
